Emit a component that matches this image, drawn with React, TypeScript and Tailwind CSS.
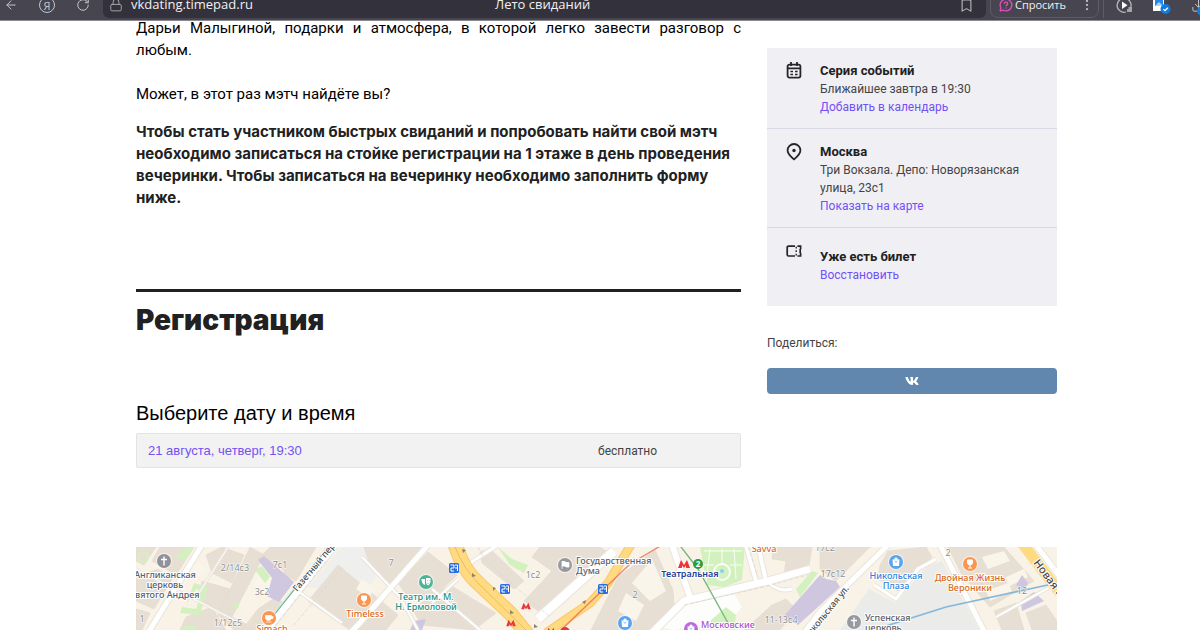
import { ArrowLeft, Bookmark, Download, EllipsisVertical, Lock, MessageCircleQuestion, RotateCw } from 'lucide-react';
import { FaVk } from 'react-icons/fa';

const buildings = [
  '0,0 20,0 8,18 0,14',
  '24,0 58,0 40,28 16,14',
  '0,30 22,22 36,32 18,62 0,54',
  '0,62 14,66 6,83 0,83',
  '70,8 86,0 108,8 96,36 76,26',
  '66,34 94,42 84,66 62,52',
  '50,70 76,60 90,83 44,83',
  '114,0 128,8 96,70 122,83 98,83 82,68',
  '134,0 180,0 160,34 122,12',
  '122,62 140,50 150,58 126,83 106,83',
  '202,18 262,68 250,83 214,83 172,54',
  '228,0 286,0 254,38 234,18',
  '262,36 292,5 321,28 294,54 272,50',
  '298,48 314,38 360,66 338,83 286,78 276,62',
  '344,5 354,2 388,34 378,42 346,16',
  '404,0 464,0 476,8 402,64 388,54 416,24 396,10',
  '519,3 537,43 538,57 517,83 455,83 482,30',
  '637,0 676,0 672,25 648,27 650,14 636,12',
  '636,58 650,52 660,62 644,83 608,83',
  '684,0 734,0 700,34 684,22',
  '752,4 790,0 796,10 762,44 742,32 744,18',
  '812,0 868,0 898,34 854,60 826,28',
  '858,64 880,56 888,83 866,83',
  '890,66 910,58 921,74 921,83 896,83',
];

const courtyards = ['516,12 530,44 514,54 496,36', '490,46 508,58 500,74 482,64', '130,12 148,24 134,48 116,40', '62,14 72,24 62,30 54,24', '226,32 240,42 232,50 220,42', '846,10 868,4 874,14 852,22', '870,30 888,22 892,30 872,40', '850,44 872,36 876,44 854,54'];

const greens = ['50,58 58,36 72,40 64,68 44,66 46,60 60,62 66,44 60,42', '119,23 126,19 134,30 129,36', '40,10 50,0 58,0 48,14', '362,0 376,12 392,18 388,26 374,18', '564,0 609,0 606,33 588,40 571,38', '574,74 590,60 600,68 598,83 580,80', '660,42 676,24 682,26 664,50', '50,78 62,80 60,83 46,83'];

const purples = ['122,13 128,9 158,35 143,55 131,49 136,31', '684,28 690,32 700,34 704,40 662,78 647,70', '880,38 886,28 892,36 888,44', '885,54 898,45 908,54 886,64', '278,74 290,72 286,83 274,83'];

const streets = [
  { d: 'M66 -2 L12 86', w: 6 },
  { d: 'M0 22 L104 76', w: 2 },
  { d: 'M92 0 L58 54', w: 2 },
  { d: 'M198 -2 L128 86', w: 9 },
  { d: 'M292 -2 L222 78 L214 86', w: 6 },
  { d: 'M226 10 L264 50 L282 83', w: 3 },
  { d: 'M162 44 L206 76', w: 3 },
  { d: 'M362 -2 L334 16', w: 4 },
  { d: 'M296 56 L322 32 M296 42 L344 83', w: 3 },
  { d: 'M478 4 L402 72', w: 10 },
  { d: 'M536 -2 L554 50', w: 7 },
  { d: 'M516 86 L548 54 L628 35 L674 22', w: 8 },
  { d: 'M610 -2 L620 34 M622 -2 L630 34', w: 5 },
  { d: 'M630 32 Q640 46 656 42', w: 4 },
  { d: 'M752 -2 L684 65 L668 86', w: 6 },
  { d: 'M804 -2 L849 86', w: 6 },
  { d: 'M738 38 L760 52 L782 22 L800 12', w: 4 },
  { d: 'M860 70 L921 36', w: 3 },
  { d: 'M900 -2 L924 30', w: 6 },
];

const houseNumbers = [
  { x: 99, y: 24, t: '2/14с3' },
  { x: 144, y: 21, t: '7с1' },
  { x: 126, y: 48, t: '3с2' },
  { x: 92, y: 79, t: '1/12с5' },
  { x: 6, y: 75, t: '1' },
  { x: 255, y: 19, t: '7' },
  { x: 397, y: 31, t: '1с2' },
  { x: 499, y: 51, t: '2' },
  { x: 645, y: 76, t: '11-13с4' },
  { x: 697, y: 30, t: '17с12' },
  { x: 689, y: 4, t: '17с2' },
  { x: 812, y: 9, t: '2' },
  { x: 886, y: 47, t: '12' },
];

const pins = [
  { x: 28, y: 14, color: '#8f9298', icon: 'cross' },
  { x: 133, y: 71, color: '#fb9550', icon: 'cup' },
  { x: 228, y: 53, color: '#fb9550', icon: 'glass' },
  { x: 290, y: 35, color: '#4fb596', icon: 'mask' },
  { x: 429, y: 18, color: '#9699a0', icon: 'flag' },
  { x: 489, y: 76, color: '#58a5f0', icon: 'bag' },
  { x: 555, y: 82, color: '#bb6be0', icon: 'bag' },
  { x: 718, y: 75, color: '#9699a0', icon: 'cross' },
  { x: 760, y: 15, color: '#58a5f0', icon: 'bag' },
  { x: 834, y: 17, color: '#fb9550', icon: 'glass' },
];

const labels = [
  { x: 29, y: 31, color: '#5c6068', lines: ['Англиканская', 'церковь', 'святого Андрея'] },
  { x: 136, y: 85, color: '#d96a20', lines: ['Simach'] },
  { x: 229, y: 70, color: '#d96a20', lines: ['Timeless'] },
  { x: 290, y: 53, color: '#27907a', lines: ['Театр им. М.', 'Н. Ермоловой'] },
  { x: 628, y: 5, color: '#d96a20', lines: ['Savva'] },
  { x: 760, y: 32, color: '#2f86dd', lines: ['Никольская', 'Плаза'] },
  { x: 834, y: 34, color: '#d96a20', lines: ['Двойная Жизнь', 'Вероники'] },
];

const leftLabels = [
  { x: 440, y: 17, color: '#5c6068', lines: ['Государственная', 'Дума'] },
  { x: 565, y: 81, color: '#a755d0', lines: ['Московские'] },
  { x: 729, y: 74, color: '#5c6068', lines: ['Успенская', 'церковь'] },
];

function PinIcon({ icon }: { icon: string }) {
  if (icon === 'cross') return <path d="M0 -4.5V4.5M-3 -1.5H3" stroke="#fff" strokeWidth="1.4" />;
  if (icon === 'cup') return <path d="M-3.5 -2.5H2.5V0Q2 2.5 -0.5 2.5T-3.5 0ZM2.5 -1.5H4V0.5H2.5M-3 4H2.5" fill="#fff" stroke="#fff" strokeWidth="0.7" />;
  if (icon === 'glass') return <path d="M-2.5 -4H2.5V-1Q2 1 0 1T-2.5 -1ZM0 1V4M-2 4H2" fill="#fff" stroke="#fff" strokeWidth="1" />;
  if (icon === 'flag') return <path d="M-3 -4V4M-3 -3.5H0L1 -2.5H4V2H1L0 1H-3" fill="#fff" stroke="#fff" strokeWidth="0.8" />;
  if (icon === 'mask')
    return (
      <>
        <path d="M-4.5 -3H-1V3Q-4.5 2 -4.5 -3ZM0 -4H4.5V0Q4 3 2 3.5Q0 3 0 0Z" fill="#fff" />
        <path d="M1 -1.5H1.8M2.8 -1.5H3.6M1.2 1Q2.3 2 3.4 1" stroke="#4fb596" strokeWidth="0.6" fill="none" />
      </>
    );
  return (
    <>
      <path d="M-3.5 -2.5H3.5L3 4H-3ZM-1.8 -2.5Q-1.6 -4.6 0 -4.6T1.8 -2.5" fill="#fff" />
      <path d="M-1.4 -1Q0 1.6 1.4 -1" stroke="#58a5f0" strokeWidth="0.8" fill="none" />
    </>
  );
}

const metroPath = 'M-6 4L-3 -4L0 1L3 -4L6 4H2.2L1.8 1.5L0 4L-1.8 1.5L-2.2 4Z';

function CityMap() {
  return (
    <svg
      role="img"
      aria-label="Карта"
      viewBox="0 0 921 83"
      preserveAspectRatio="xMidYMin slice"
      className="block h-[83px] w-full font-['Noto_Sans',sans-serif] text-[9px]"
    >
      <rect width="921" height="83" fill="#f9f2e6" />
      <polygon points="206,0 232,0 240,30 212,64 192,44 172,40" fill="#efefee" />
      <polygon points="704,83 733,42 760,56 790,20 806,14 843,83" fill="#ebebea" />
      <polygon points="548,56 598,46 606,60 596,72 538,83 524,80" fill="#fdfdfb" />
      {buildings.map((p) => <polygon key={p} points={p} fill="#e8dfd4" stroke="#e0d6ca" strokeWidth="0.5" />)}
      {courtyards.map((p) => <polygon key={p} points={p} fill="#f9f5ea" />)}
      {greens.map((p) => <polygon key={p} points={p} fill="#d3f1bf" />)}
      {purples.map((p) => <polygon key={p} points={p} fill="#cec7df" />)}
      {streets.map((s) => <path key={s.d} d={s.d} stroke="#e9e5dd" strokeWidth={s.w + 1} fill="none" />)}
      {streets.map((s) => <path key={s.d} d={s.d} stroke="#fff" strokeWidth={s.w - 1} fill="none" />)}

      <g fill="none" stroke="#f8fff2">
        <circle cx="7" cy="10" r="5" stroke="#d3f1bf" strokeWidth="2" />
        <circle cx="586" cy="25" r="8" strokeWidth="2" />
        <path d="M568 4H606M568 18H578M594 18H606M586 2V16M574 2L570 36M598 2L600 32" strokeWidth="1" />
      </g>
      <circle cx="100" cy="59" r="3" fill="#d3f1bf" />
      <circle cx="586" cy="24" r="2" fill="#8ccdf5" />

      <g fill="none" stroke="#d8d5cf" strokeWidth="0.7" strokeDasharray="4 2">
        <path d="M312 0L324 26L396 83M342 0L350 14L414 70M190 14L138 80M206 20L158 78M548 58L628 40L672 28M612 0L622 30" />
      </g>

      <path d="M319 -4Q326 22 342 36L374 66L392 88" fill="none" stroke="#fbc766" strokeWidth="15" />
      <path d="M319 -4Q326 22 342 36L374 66L392 88" fill="none" stroke="#ffda80" strokeWidth="13" />
      <path d="M496 -4L472 36L454 56L410 86" fill="none" stroke="#fbc766" strokeWidth="9" />
      <path d="M496 -4L472 36L454 56L410 86" fill="none" stroke="#ffda80" strokeWidth="7" />
      <path d="M886 -4L924 46" fill="none" stroke="#ffda80" strokeWidth="11" />
      <path d="M319 0Q328 22 342 36L390 83" fill="none" stroke="#d8aa55" strokeWidth="0.6" />
      <path d="M526 -2L494 17L472 38L422 86" fill="none" stroke="#ec6a52" strokeWidth="1.4" opacity="0.8" />
      <path d="M194 -2L130 78" stroke="#58b48b" strokeWidth="1.2" />
      <path d="M542 -4L562 22L592 76" fill="none" stroke="#78b783" strokeWidth="1.4" />
      <path d="M750 79L810 60L921 36" fill="none" stroke="#83b7dc" strokeWidth="1.6" />

      <g fill="#8a8273">
        <path d="M326 2l4 1-3 3zM336 26l4 3-4 1zM360 41l-3 3 0-4zM374 63l4 3-4 1zM398 77l4 3-4 1zM446 55l4-2-1 4z" />
      </g>

      <g fill="#8d8d8d" textAnchor="middle" stroke="#fff" strokeWidth="1" paintOrder="stroke">
        {houseNumbers.map((n) => <text key={n.t + n.x} x={n.x} y={n.y}>{n.t}</text>)}
      </g>

      {[[318, 21], [369, 42], [467, 42]].map(([x, y]) => (
        <g key={x} transform={`translate(${x} ${y})`}>
          <rect x="-5" y="-5" width="10" height="10" rx="1.5" fill="#2d6fe0" />
          <path d="M-3.5 -3H0V0H-3V3H0M1 -3H3.5V3M1 0H3.5" stroke="#fff" strokeWidth="1" fill="none" />
        </g>
      ))}

      {[[390, 59], [375, 76], [415, 84]].map(([x, y]) => (
        <path key={x} d={metroPath} transform={`translate(${x} ${y}) scale(0.8)`} fill="#e8343b" />
      ))}
      <circle cx="429" cy="85" r="5" fill="#e8343b" />
      <path d={metroPath} transform="translate(548 17)" fill="#ee3338" />
      <circle cx="562" cy="17" r="5" fill="#2a9d3c" />
      <text x="562" y="20" textAnchor="middle" fill="#fff" className="text-[8px] font-bold">2</text>

      {pins.map((p) => (
        <g key={p.x} transform={`translate(${p.x} ${p.y})`}>
          <circle r="8" fill="#fff" opacity="0.6" />
          <circle r="7" fill={p.color} />
          <PinIcon icon={p.icon} />
        </g>
      ))}

      <g className="font-medium" stroke="#fff" strokeWidth="2" strokeLinejoin="round" paintOrder="stroke">
        {labels.map((l) => (
          <text key={l.lines[0]} y={l.y} textAnchor="middle" fill={l.color}>
            {l.lines.map((t, i) => <tspan key={t} x={l.x} dy={i ? 10 : 0}>{t}</tspan>)}
          </text>
        ))}
        {leftLabels.map((l) => (
          <text key={l.lines[0]} y={l.y} fill={l.color}>
            {l.lines.map((t, i) => <tspan key={t} x={l.x} dy={i ? 10 : 0}>{t}</tspan>)}
          </text>
        ))}
        <text x="554" y="30" textAnchor="middle" fill="#243e96" className="font-semibold">Театральная</text>
        <g fill="#4a4a4a">
          <text transform="translate(161 45) rotate(-50)">Газетный пер.</text>
          <text transform="translate(671 94) rotate(-51)">Никольская ул.</text>
          <text transform="translate(897 16) rotate(53)" className="text-[11px]">Новая пл.</text>
        </g>
      </g>
    </svg>
  );
}

function CalendarIcon() {
  return (
    <svg width="16" height="18" viewBox="0 0 16 18" fill="none" stroke="#262626" strokeWidth="1.8" className="shrink-0">
      <rect x="1.6" y="2.6" width="12.8" height="13" rx="1.8" />
      <path d="M1.6 6.4H14.4M5 0V4M11 0V4" />
      <path d="M4.4 9.6H7M9 9.6H11.6M4.4 12.6H7M9 12.6H11.6" strokeWidth="1.5" />
    </svg>
  );
}

function PlaceIcon() {
  return (
    <svg width="16" height="18" viewBox="0 0 16 18" fill="none" stroke="#262626" strokeWidth="1.8" className="shrink-0">
      <path d="M8 16.4C5.4 14 1.6 11 1.6 7.4A6.4 6.4 0 0 1 14.4 7.4C14.4 11 10.6 14 8 16.4Z" />
      <circle cx="8" cy="7.5" r="1.7" fill="#262626" stroke="none" />
    </svg>
  );
}

function TicketIcon() {
  return (
    <svg width="16" height="18" viewBox="0 0 16 18" fill="none" stroke="#262626" strokeWidth="1.7" className="shrink-0">
      <path d="M9 4.2H2.6Q1.2 4.2 1.2 5.4V12.8Q1.2 14 2.6 14H9" />
      <path d="M11.4 4.2H14.6V7.2M14.6 11V14H11.4M14.2 7V11.2" />
      <path d="M10.2 4.8V6.4M10.2 8.2V10M10.2 11.8V13.4" strokeWidth="1.4" />
    </svg>
  );
}

function BrowserBar() {
  return (
    <header className="h-[21px] overflow-hidden border-b border-[#8c8b92] bg-[#474650] font-['Open_Sans',sans-serif] text-[13px] text-[#f0f0f2]">
      <div className="-mt-2 flex h-[26px] items-center">
        <div className="flex w-[103px] shrink-0 items-center gap-[21px] pl-1 text-[#c4c4ca]">
          <button aria-label="Назад"><ArrowLeft size={14} strokeWidth={1.7} /></button>
          <button aria-label="Яндекс" className="flex size-4 items-center justify-center rounded-full border border-[#c4c4ca] text-[11px] leading-none">Я</button>
          <button aria-label="Обновить"><RotateCw size={14} strokeWidth={1.7} /></button>
        </div>
        <div className="flex h-full flex-1 items-center rounded-b-md bg-[#33323c] pr-3 pl-1.5">
          <Lock size={14} strokeWidth={1.6} className="shrink-0 text-[#a9a9b0]" />
          <input aria-label="Адрес" readOnly value="vkdating.timepad.ru" className="ml-2 w-40 bg-transparent outline-none" />
          <span className="flex-1 pl-[204px] whitespace-nowrap">Лето свиданий</span>
          <button aria-label="В закладки"><Bookmark size={15} strokeWidth={1.8} className="text-[#b4b4ba]" /></button>
        </div>
        <div className="ml-1 flex h-full items-center rounded-b-lg border border-[#5e5d67] pl-2 text-[11px]">
          <button className="flex items-center gap-0.5">
            <MessageCircleQuestion size={14} strokeWidth={2.2} className="text-[#e64fc4]" />
            Спросить
          </button>
          <button aria-label="Меню" className="ml-3.5 pr-1"><EllipsisVertical size={14} className="text-[#b4b4ba]" /></button>
        </div>
        <div className="ml-1 flex h-full w-[97px] shrink-0 items-center border-l border-[#5e5d67] pl-3">
          <button aria-label="Видео">
            <svg width="17" height="17" viewBox="0 0 17 17">
              <path d="M14 12A7 7 0 1 0 10 15" fill="none" stroke="#b4b4ba" strokeWidth="1.3" />
              <path d="M6 4.5V12L11.5 8.2Z" fill="#fff" />
              <path d="M11 15V12H12.5V10H16V15Z" fill="#a4a4aa" />
            </svg>
          </button>
          <button aria-label="Расширение" className="ml-5">
            <svg width="18" height="18" viewBox="0 0 18 18">
              <path d="M0 0H11V15H0Z" fill="#fff" />
              <path d="M2 4H10V10H2Z" fill="#2787e8" />
              <path d="M2 10L6 6L10 10Z" fill="#a8d5ff" />
              <circle cx="12.5" cy="13" r="5" fill="#0f7ce0" />
              <path d="M10.3 13.1L12 14.7L14.8 11.7" fill="none" stroke="#fff" strokeWidth="1.3" />
            </svg>
          </button>
          <button aria-label="Загрузки" className="relative ml-5">
            <Download size={15} strokeWidth={1.6} className="text-[#c4c4ca]" />
            <span className="absolute top-2 left-1.5 size-2.5 rounded-full bg-[#0f7ce0]" />
          </button>
        </div>
      </div>
    </header>
  );
}

export default function App() {
  return (
    <div className="overflow-x-hidden bg-white font-['Roboto',sans-serif] text-[#212121]">
      <BrowserBar />
      <main className="mx-auto box-content max-w-[921px] pr-[7px]">
        <div className="flex gap-[26px]">
          <article className="-mt-1 min-w-0 flex-1">
            <div className="text-[15px] leading-[22px] text-black">
              <p className="text-justify">
                Дарьи Малыгиной, подарки и атмосфера, в которой легко завести разговор с любым.
              </p>
              <p className="mt-[22px]">Может, в этот раз мэтч найдёте вы?</p>
            </div>
            <p className="mt-4 font-['Inter',sans-serif] text-[15px] leading-[22px] font-bold">
              Чтобы стать участником быстрых свиданий и попробовать найти свой мэтч необходимо записаться на стойке
              регистрации на 1 этаже в день проведения вечеринки. Чтобы записаться на вечеринку необходимо заполнить
              форму ниже.
            </p>

            <section className="mt-20 border-t-3 border-[#212121] pt-3">
              <h2 className="font-['Inter',sans-serif] text-[28px] leading-8 font-black">Регистрация</h2>
              <h3 className="mt-[65px] font-['Liberation_Sans',sans-serif] text-[20px] leading-6 text-black">
                Выберите дату и время
              </h3>
              <div className="mt-2 flex h-[35px] items-center rounded-xs border border-[#e3e3e3] bg-[#f2f2f2] px-[11px] font-['Liberation_Sans',sans-serif] text-[13px]">
                <a href="#date" className="flex-1 text-[#7351f5]">21 августа, четверг, 19:30</a>
                <span className="w-[131px] font-['Roboto',sans-serif] text-[12px] text-[#444]">бесплатно</span>
              </div>
            </section>
          </article>

          <aside className="mt-[27px] w-[290px] shrink-0 text-[12px] leading-[18px] text-[#444]">
            <div className="divide-y divide-[#dad8e8] bg-[#f0eff4]">
              <section className="flex gap-[18px] px-[19px] pt-[14px] pb-3">
                <CalendarIcon />
                <div>
                  <h4 className="text-[13px] font-bold text-[#212121]">Серия событий</h4>
                  <p>Ближайшее завтра в 19:30</p>
                  <a href="#calendar" className="text-[#7351f5]">Добавить в календарь</a>
                </div>
              </section>
              <section className="flex gap-[18px] px-[19px] pt-[14px] pb-3">
                <PlaceIcon />
                <div>
                  <h4 className="text-[13px] font-bold text-[#212121]">Москва</h4>
                  <p>Три Вокзала. Депо: Новорязанская улица, 23с1</p>
                  <a href="#map" className="text-[#7351f5]">Показать на карте</a>
                </div>
              </section>
              <section className="flex gap-[18px] px-[19px] pt-[14px] pb-[22px]">
                <TicketIcon />
                <div className="pt-1.5">
                  <h4 className="text-[13px] font-bold text-[#212121]">Уже есть билет</h4>
                  <a href="#restore" className="text-[#7351f5]">Восстановить</a>
                </div>
              </section>
            </div>
            <p className="mt-7">Поделиться:</p>
            <button aria-label="ВКонтакте" className="mt-4 flex h-[26px] w-full items-center justify-center rounded-sm bg-[#6287ae] text-white">
              <FaVk size={14} />
            </button>
          </aside>
        </div>

        <section id="map" className="mt-[79px]">
          <CityMap />
        </section>
      </main>
    </div>
  );
}
